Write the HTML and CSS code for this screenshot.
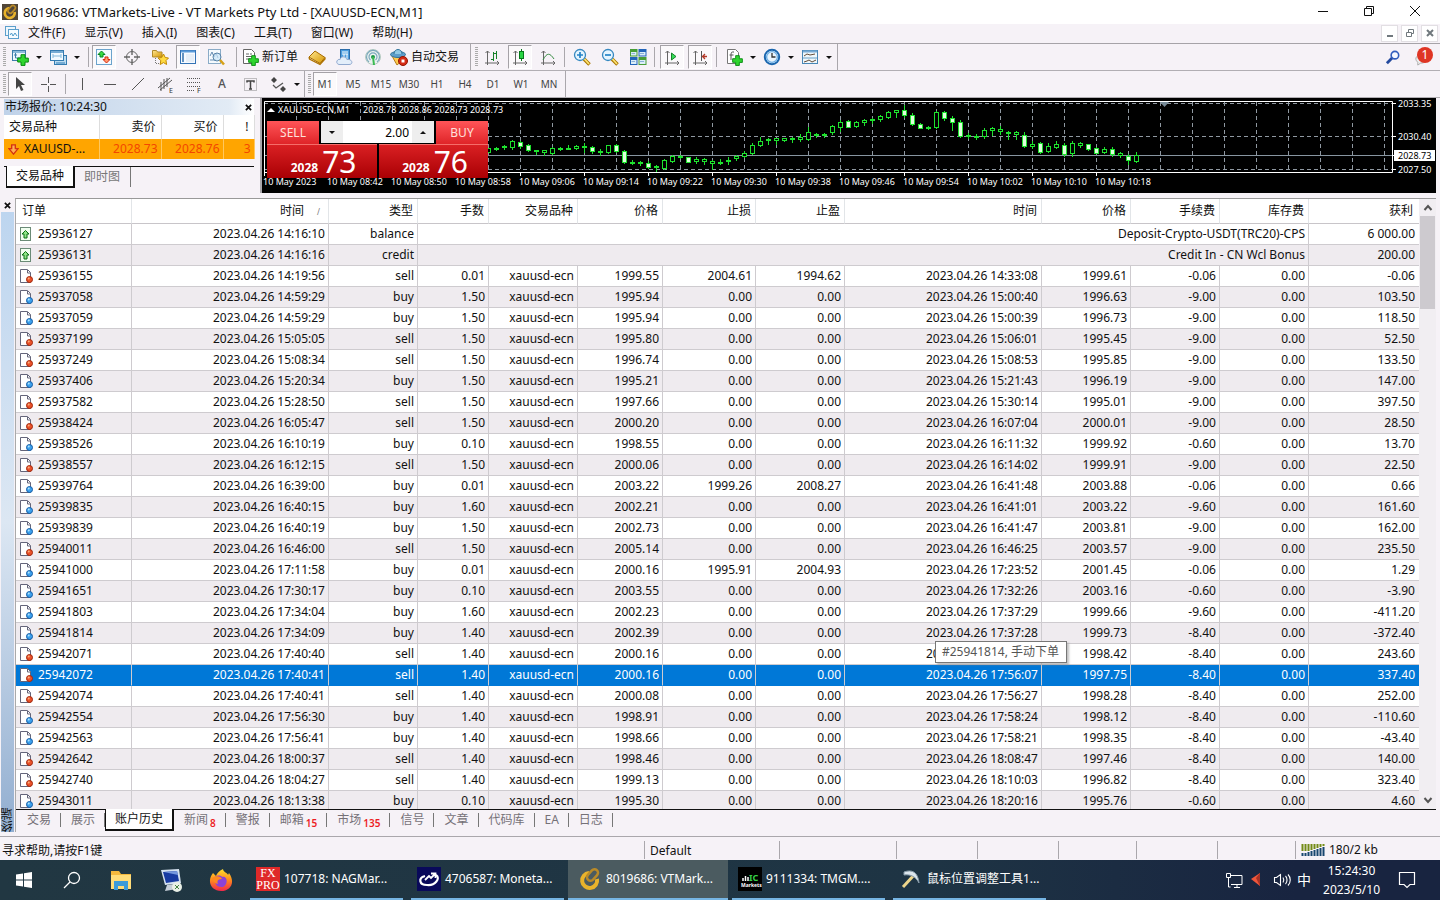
FILE: index.html
```html
<!DOCTYPE html>
<html lang="zh-CN">
<head>
<meta charset="utf-8">
<title>8019686: VTMarkets-Live - VT Markets Pty Ltd - [XAUUSD-ECN,M1]</title>
<link rel="stylesheet" href="styles.css">
</head>
<body>
<svg class="defs" aria-hidden="true">
  <defs>
    <linearGradient id="gold" x1="0" y1="0" x2="1" y2="1"><stop offset="0" stop-color="#ffe793"/><stop offset="1" stop-color="#d59600"/></linearGradient>
    <linearGradient id="fire" x1="0" y1="0" x2="0" y2="1"><stop offset="0" stop-color="#ffe02e"/><stop offset="0.5" stop-color="#ff8a1c"/><stop offset="1" stop-color="#f0284c"/></linearGradient>
    <symbol id="plus" viewBox="0 0 12 12"><path d="M4 .7h4v3.400h3.300v4H8v3.300H4V8H.7V4H4z" fill="#2fd52f" stroke="#078a10"/></symbol>
    <symbol id="newchart" viewBox="0 0 18 18"><rect x="1.500" y="2.500" width="13" height="10" fill="#edf6fd" stroke="#3d7cab"/><path d="M2 4h12" stroke="#8cbadb" stroke-width="2"/><path d="M4.500 5v5h6M3 7h3" fill="none" stroke="#3d7cab"/><use href="#plus" x="6" y="6" width="12" height="12"/></symbol>
    <symbol id="windows" viewBox="0 0 18 18"><rect x="5.500" y="7.500" width="12" height="9" fill="#bddcf0" stroke="#347bb0"/><rect x="1.500" y="2.500" width="13" height="10" fill="#f2faff" stroke="#347bb0"/><path d="M2 4h12M7 15h9" stroke="#76acd4" stroke-width="2"/><path d="M4 8h8M4 6v4m8-4v4" stroke="#83b8da"/></symbol>
    <symbol id="market" viewBox="0 0 18 18"><rect x="1.500" y="1.500" width="15" height="15" fill="#f4faff" stroke="#6ba3cc"/><path d="M6.500 3l3.500 3.500H8V9H5V6.500H3z" fill="#3adb41" stroke="#078522"/><path d="M10 9h3v2.500h2L11.500 15 8 11.500h2z" fill="#ff9a71" stroke="#d92608"/></symbol>
    <symbol id="target" viewBox="0 0 18 18"><circle cx="9" cy="9" r="5.500" fill="none" stroke="#666"/><path d="M9 1v6M9 11v6M1 9h6M11 9h6" stroke="#666" stroke-width="1.400"/></symbol>
    <symbol id="favorites" viewBox="0 0 18 18"><path d="M1.500 8V2.500h4l1 1.500H11v5H1.500z" fill="url(#gold)" stroke="#b08a2c"/><path d="M4.500 10v5.500H9" fill="none" stroke="#777" stroke-dasharray="1 1"/><path d="M12.500 6l1.700 3.500 3.300.5-2.500 2.600.6 3.900-3.100-1.900-3.300 1.900.6-3.900L7 10l3.700-.5z" fill="#ffda42" stroke="#c28900"/></symbol>
    <symbol id="terminal" viewBox="0 0 18 18"><rect x="1.500" y="2.500" width="15" height="13" fill="#f6faff" stroke="#3473b5"/><path d="M2 3.500h14" stroke="#5b9cda" stroke-width="2"/><path d="M3 5h2v9H3z" fill="#6292c1"/><path d="M7 7h8M7 9h8M7 11h8M7 13h8" stroke="#d7e3ef"/></symbol>
    <symbol id="tester" viewBox="0 0 18 18"><rect x="1.500" y="1.500" width="12" height="14" fill="#f5fafe" stroke="#8aabc7"/><path d="M3 8l2-4 2 5 2-4 2 5M3 12h6" fill="none" stroke="#688eb4"/><circle cx="10" cy="9" r="4" fill="#c9e4f7" fill-opacity=".7" stroke="#5783a9"/><path d="M13 12l4 4.500" stroke="#d5a11a" stroke-width="2.500"/></symbol>
    <symbol id="order" viewBox="0 0 18 18"><path d="M2.500 1.500h8l3 3v11h-11z" fill="#fff" stroke="#666"/><path d="M5 6h3m1 0h2M5 8.500h6M5 11h4" stroke="#666"/><use href="#plus" x="7" y="7" width="11" height="11"/></symbol>
    <symbol id="book" viewBox="0 0 18 18"><path d="M1 9l6-6 10 6.500-5 6z" fill="url(#gold)" stroke="#a66a00"/><path d="M1 9l.5 2L12 16.500l5-5.500V9.500" fill="none" stroke="#ae7200" stroke-width="1.300"/></symbol>
    <symbol id="cloud" viewBox="0 0 18 18"><rect x="4.500" y="1.500" width="9" height="10" fill="#4b9de0" stroke="#2c6ca9"/><path d="M6 4h6M6 6h6M8 6v5m3-5v5" stroke="#fff"/><path d="M3 16.500c-4-1-2-6 1-5 1-4 6-3 7 0 5-1 7 5 2 5z" fill="#e3eefa" stroke="#91a9cf"/></symbol>
    <symbol id="signal" viewBox="0 0 18 18"><circle cx="9" cy="9" r="7.500" fill="#eef3f1" stroke="#b4c9c0"/><path d="M6.500 12a4 4 0 1 1 5 0M5 14a6.500 6.500 0 1 1 8 0" fill="none" stroke="#7ba9bd" stroke-width="1.200"/><circle cx="9" cy="9" r="2" fill="#1d9747"/><path d="M9 9l1 8" stroke="#3bbb52" stroke-width="2"/></symbol>
    <symbol id="auto" viewBox="0 0 18 18"><path d="M2 8l5 9 8-7z" fill="#ffca50" stroke="#b47e1a"/><ellipse cx="8" cy="6.500" rx="7.500" ry="3" fill="#5c9dca" stroke="#317399"/><path d="M4 6c0-6 8-6 8 0" fill="#91c9e5" stroke="#317399"/><circle cx="13" cy="13" r="4.500" fill="#d52b15" stroke="#921500"/><path d="M11.500 11.500h3v3h-3z" fill="#fff"/></symbol>
    <symbol id="axes" viewBox="0 0 18 18"><path d="M4.500 3v12H16M2.500 5l2-2 2 2M14 13l2 2-2 2M2 15h2.500v2" fill="none" stroke="#666"/></symbol>
    <symbol id="bars" viewBox="0 0 18 18"><use href="#axes"/><path d="M8 11.500h2.500M10.500 4v9M10.500 5.500H13M13.500 3v8" fill="none" stroke="#168129"/></symbol>
    <symbol id="candles" viewBox="0 0 18 18"><use href="#axes"/><path d="M10.500 1v12" stroke="#05791a"/><rect x="8.500" y="3.500" width="4" height="7" fill="#28d443" stroke="#05791a"/></symbol>
    <symbol id="line" viewBox="0 0 18 18"><use href="#axes"/><path d="M4 12c4-8 7-7 11-1" fill="none" stroke="#398d45"/></symbol>
    <symbol id="zoombase" viewBox="0 0 18 18"><path d="M11 11l5.500 5.500" stroke="#a97600" stroke-width="3.500"/><path d="M11 10.500l5 5.500" stroke="#ffe574" stroke-width="1.700"/><circle cx="7" cy="7" r="5.500" fill="#e5f5ff" stroke="#3688c0" stroke-width="1.300"/></symbol>
    <symbol id="zoomin" viewBox="0 0 18 18"><use href="#zoombase"/><path d="M4 7h6M7 4v6" stroke="#2483c8" stroke-width="1.700"/></symbol>
    <symbol id="zoomout" viewBox="0 0 18 18"><use href="#zoombase"/><path d="M4 7h6" stroke="#2483c8" stroke-width="1.700"/></symbol>
    <symbol id="tiles" viewBox="0 0 18 18"><path d="M1 1h7.500v7.500H1zM9.500 9h8v8h-8z" fill="#479e37"/><path d="M9.500 1h8v7.500h-8zM1 9h7.500v8H1z" fill="#2265ba"/><path d="M2 4h5.500v3.500H2zM10.500 4h6v3.500h-6zM2 12h5.500v4H2zM10.500 12h6v4h-6z" fill="#dbeef9"/><path d="M2.500 5.500H6m5 0h4m-12.500 8H6m5 0h4" stroke="#8ab0d5"/></symbol>
    <symbol id="scroll" viewBox="0 0 18 18"><use href="#axes"/><path d="M8.500 5v7l4.500-3.500z" fill="#37dd59" stroke="#168129"/></symbol>
    <symbol id="shift" viewBox="0 0 18 18"><use href="#axes"/><path d="M10.500 3v10" stroke="#555"/><path d="M16 8.500h-4m2-2.500l-2.500 2.500L14 11" fill="none" stroke="#b33929" stroke-width="1.300"/></symbol>
    <symbol id="indicator" viewBox="0 0 18 18"><path d="M2.500 1.500h8l3 3v11h-11z" fill="#fff" stroke="#777"/><path d="M9 4H7.500C6 4 6 6 6 8v4M4.500 7h4" fill="none" stroke="#555"/><use href="#plus" x="7" y="7" width="11" height="11"/></symbol>
    <symbol id="clock" viewBox="0 0 18 18"><circle cx="9" cy="9" r="7.200" fill="#fff" stroke="#1a66ae" stroke-width="2"/><circle cx="9" cy="9" r="5.400" fill="#eaf5fd" stroke="#70b0e5" stroke-width="1.400"/><path d="M9 5v4h3.500" fill="none" stroke="#333" stroke-width="1.300"/></symbol>
    <symbol id="template" viewBox="0 0 18 18"><rect x="1.500" y="2.500" width="15" height="13" fill="#eff8fc" stroke="#4987b6"/><path d="M2 3.500h14" stroke="#78aad5" stroke-width="2"/><path d="M2 10h14" stroke="#689ec5"/><path d="M3 8l3-2 3 1 5-1M3 14l3-1 2-1 3 2 4-2" fill="none" stroke="#654c39"/></symbol>
    <symbol id="pointer" viewBox="0 0 18 18"><path d="M5 2v12l3-3 2 5 2.500-1-2.500-5h4z" fill="#444"/></symbol>
    <symbol id="cross" viewBox="0 0 18 18"><path d="M9.500 2v6M9.500 11v6M2 9.500h6M11 9.500h6" stroke="#555"/></symbol>
    <symbol id="vline" viewBox="0 0 18 18"><path d="M9.500 3v12" stroke="#555"/></symbol>
    <symbol id="hline" viewBox="0 0 18 18"><path d="M3 9.500h12" stroke="#555"/></symbol>
    <symbol id="trend" viewBox="0 0 18 18"><path d="M3 15L15 3" stroke="#555"/></symbol>
    <symbol id="channel" viewBox="0 0 18 18"><path d="M1 13L13 3M3 15L15 5M4 7v9M7 4v10M10 3v9" stroke="#555"/><text x="12" y="18" font-size="7" font-family="Noto Sans" fill="#333">E</text></symbol>
    <symbol id="fibo" viewBox="0 0 18 18"><path d="M2 3.500h14M2 7.500h14M2 11.500h14M2 15.500h8" stroke="#555" stroke-dasharray="1 1"/><text x="12" y="18" font-size="7" font-family="Noto Sans" fill="#333">F</text></symbol>
    <symbol id="label" viewBox="0 0 18 18"><rect x="3.500" y="3.500" width="12" height="12" fill="none" stroke="#888" stroke-dasharray="1 1"/><path d="M6 7.500V6h7v1.500M9.500 6v8M8 14h3" fill="none" stroke="#444" stroke-width="1.500"/></symbol>
    <symbol id="arrows" viewBox="0 0 18 18"><path d="M5 2l3 3-3 3-3-3zM14 11l3 3-3 3-3-3z" fill="#444"/><path d="M4 10l3 3 7-5" fill="none" stroke="#555" stroke-width="1.300"/></symbol>
    <symbol id="deposit" viewBox="0 0 14 14"><rect x="1.500" y=".5" width="10" height="13" fill="#f1fff0" stroke="#6b8b77"/><path d="M6.500 3.500l3.500 3.500H8v4H5V7H3z" fill="#8ee486" stroke="#077012"/></symbol>
    <symbol id="doc" viewBox="0 0 14 14"><path d="M1.500 .5h7l3 3v10h-10z" fill="#fff" stroke="#64657a"/><path d="M8.500 1v3h3" fill="none" stroke="#64657a"/></symbol>
    <symbol id="sell" viewBox="0 0 14 14"><use href="#doc"/><circle cx="10.500" cy="10.500" r="3" fill="#eb522a" stroke="#a32609"/><circle cx="9.700" cy="9.500" r="1" fill="#ffb07b"/></symbol>
    <symbol id="buy" viewBox="0 0 14 14"><use href="#doc"/><circle cx="10.500" cy="10.500" r="3" fill="#3da1ed" stroke="#145ca6"/><circle cx="9.700" cy="9.500" r="1" fill="#b0e5ff"/></symbol>
    <symbol id="vt" viewBox="0 0 24 24"><path d="M11 6a7.500 7.500 0 1 0 8 6" fill="none" stroke="#e9b32b" stroke-width="4"/><rect x="11" y="1.500" width="7" height="13" rx="3.500" transform="rotate(42 14.500 8)" fill="none" stroke="#b98a28" stroke-width="2.500"/></symbol>
  </defs>
</svg>

<header class="titlebar">
  <span class="app-icon"><svg class="fill"><use href="#vt"/></svg></span>
  <h1>8019686: VTMarkets-Live - VT Markets Pty Ltd - [XAUUSD-ECN,M1]</h1>
  <div class="win-buttons">
    <button aria-label="最小化"><svg viewBox="0 0 12 12"><path d="M1 6.500h10"/></svg></button>
    <button aria-label="还原"><svg viewBox="0 0 12 12"><path d="M1.500 3.500h7v7h-7zM3.500 3.500v-2h7v7h-2"/></svg></button>
    <button aria-label="关闭"><svg viewBox="0 0 12 12"><path d="M1 1l10 10M11 1L1 11"/></svg></button>
  </div>
</header>

<nav class="menubar">
  <svg class="menu-icon" viewBox="0 0 16 16"><rect x="1.500" y="1.500" width="10" height="9" fill="#eef7fd" stroke="#5c9fcb"/><rect x="4.500" y="4.500" width="10" height="9" fill="#f7fcff" stroke="#5c9fcb"/><path d="M6 10l1.500-2L9 11l2-3 2 3" fill="none" stroke="#4e9ac9"/></svg>
  <button>文件(F)</button><button>显示(V)</button><button>插入(I)</button><button>图表(C)</button><button>工具(T)</button><button>窗口(W)</button><button>帮助(H)</button>
  <div class="mdi">
    <button aria-label="最小化图表"><svg viewBox="0 0 12 12"><path d="M3 9h6"/></svg></button>
    <button aria-label="还原图表"><svg viewBox="0 0 12 12"><path class="thin" d="M2.500 5.500h5v4h-5zM4.500 5V2.500h5v4H8"/></svg></button>
    <button aria-label="关闭图表"><svg viewBox="0 0 12 12"><path d="M3 3l6 6M9 3L3 9"/></svg></button>
  </div>
</nav>

<div class="toolrow">
  <div class="toolbar main">
    <span class="grip"></span>
    <button class="tool" aria-label="新图表"><svg><use href="#newchart"/></svg></button><button class="drop" aria-label="图表列表"></button>
    <button class="tool" aria-label="配置"><svg><use href="#windows"/></svg></button><button class="drop" aria-label="配置列表"></button>
    <span class="sep"></span>
    <button class="tool on" aria-label="市场报价"><svg><use href="#market"/></svg></button>
    <button class="tool" aria-label="数据窗口"><svg><use href="#target"/></svg></button>
    <button class="tool" aria-label="导航"><svg><use href="#favorites"/></svg></button>
    <button class="tool on" aria-label="终端窗口"><svg><use href="#terminal"/></svg></button>
    <button class="tool" aria-label="测试"><svg><use href="#tester"/></svg></button>
    <span class="sep"></span>
    <button class="tool wide"><svg><use href="#order"/></svg>新订单</button>
    <button class="tool" aria-label="编辑器"><svg><use href="#book"/></svg></button>
    <button class="tool" aria-label="主机"><svg><use href="#cloud"/></svg></button>
    <button class="tool" aria-label="交易信号"><svg><use href="#signal"/></svg></button>
    <button class="tool wide"><svg><use href="#auto"/></svg>自动交易</button>
  </div>
  <div class="toolbar charts">
    <span class="grip"></span>
    <button class="tool" aria-label="柱状图"><svg><use href="#bars"/></svg></button>
    <button class="tool on" aria-label="蜡烛图"><svg><use href="#candles"/></svg></button>
    <button class="tool" aria-label="折线图"><svg><use href="#line"/></svg></button>
    <span class="sep"></span>
    <button class="tool" aria-label="放大"><svg><use href="#zoomin"/></svg></button>
    <button class="tool" aria-label="缩小"><svg><use href="#zoomout"/></svg></button>
    <button class="tool" aria-label="平铺"><svg><use href="#tiles"/></svg></button>
    <span class="sep"></span>
    <button class="tool on" aria-label="自动滚动"><svg><use href="#scroll"/></svg></button>
    <button class="tool on" aria-label="图表平移"><svg><use href="#shift"/></svg></button>
    <span class="sep"></span>
    <button class="tool" aria-label="指标"><svg><use href="#indicator"/></svg></button><button class="drop" aria-label="指标列表"></button>
    <button class="tool" aria-label="周期"><svg><use href="#clock"/></svg></button><button class="drop" aria-label="周期列表"></button>
    <button class="tool" aria-label="模板"><svg><use href="#template"/></svg></button><button class="drop" aria-label="模板列表"></button>
  </div>
  <div class="tool-right">
    <button aria-label="搜索"><svg viewBox="0 0 18 18"><path d="M2 15l6-6" stroke="#23499e" stroke-width="3"/><circle cx="10.500" cy="6.500" r="4" fill="#f4f8ff" stroke="#315dbd" stroke-width="1.700"/></svg></button>
    <button class="notice" aria-label="通知"><svg viewBox="0 0 18 18"><path d="M4 14c-5-4 0-9 5-8 6 2 6 9-2 9l-3 2z" fill="#eee" stroke="#aaa"/></svg><span class="badge">1</span></button>
  </div>
</div>
<div class="toolrow second">
  <div class="toolbar">
    <span class="grip"></span>
    <button class="tool on" aria-label="光标"><svg><use href="#pointer"/></svg></button>
    <button class="tool" aria-label="十字准线"><svg><use href="#cross"/></svg></button>
    <span class="sep"></span>
    <button class="tool" aria-label="垂直线"><svg><use href="#vline"/></svg></button>
    <button class="tool" aria-label="水平线"><svg><use href="#hline"/></svg></button>
    <button class="tool" aria-label="趋势线"><svg><use href="#trend"/></svg></button>
    <button class="tool" aria-label="通道"><svg><use href="#channel"/></svg></button>
    <button class="tool" aria-label="斐波那契"><svg><use href="#fibo"/></svg></button>
    <button class="tool letter">A</button>
    <button class="tool" aria-label="文本标签"><svg><use href="#label"/></svg></button>
    <button class="tool" aria-label="箭头"><svg><use href="#arrows"/></svg></button><button class="drop" aria-label="箭头列表"></button>
  </div>
  <div class="toolbar periods">
    <span class="grip"></span>
    <button class="tool on">M1</button><button class="tool">M5</button><button class="tool">M15</button><button class="tool">M30</button><button class="tool">H1</button><button class="tool">H4</button><button class="tool">D1</button><button class="tool">W1</button><button class="tool">MN</button>
  </div>
</div>

<section class="upper">
  <aside class="watch">
    <div class="watch-title"><span>市场报价: 10:24:30</span><button aria-label="关闭市场报价"><svg viewBox="0 0 8 8"><path d="M1 1l6 6M7 1L1 7"/></svg></button></div>
    <table class="quotes">
      <colgroup><col class="q1"><col class="q2"><col class="q2"><col class="q3"></colgroup>
      <thead><tr><th>交易品种</th><th>卖价</th><th>买价</th><th>!</th></tr></thead>
      <tbody><tr><td><svg class="down" viewBox="0 0 12 12"><path d="M4 1h4v4h3l-5 6-5-6h3z" fill="#ffb055" stroke="#d53212" stroke-width="1.500"/></svg>XAUUSD-...</td><td>2028.73</td><td>2028.76</td><td>3</td></tr></tbody>
    </table>
    <div class="watch-tabs"><button class="active">交易品种</button><button>即时图</button></div>
  </aside>
  <div class="chart">
    <svg class="plot" id="plot" viewBox="262 98 1174 95" preserveAspectRatio="xMinYMin slice" role="img" aria-label="XAUUSD-ECN M1"></svg>
    <div class="trade">
      <div class="trade-top">
        <button class="side">SELL</button>
        <div class="lots"><button aria-label="减少"><i class="tri-down"></i></button><input aria-label="手数" value="2.00"><button aria-label="增加"><i class="tri-up"></i></button></div>
        <button class="side">BUY</button>
      </div>
      <div class="trade-prices">
        <button><small>2028</small><b>73</b></button>
        <button><small>2028</small><b>76</b></button>
      </div>
    </div>
  </div>
</section>

<main class="terminal">
  <div class="strip">
    <button aria-label="关闭终端"><svg viewBox="0 0 8 8"><path d="M1 1l6 6M7 1L1 7"/></svg></button>
    <div class="strip-bar"><span>终端</span></div>
  </div>
  <div class="terminal-body">
    <div class="history">
      <div class="history-scroll">
        <table class="orders">
          <colgroup><col class="w116"><col class="w197"><col class="w89"><col class="w71"><col class="w89"><col class="w85"><col class="w93"><col class="w89"><col class="w197"><col class="w89"><col class="w89"><col class="w89"><col class="w110"></colgroup>
          <thead><tr><th>订单</th><th>时间<span class="sort">/</span></th><th>类型</th><th>手数</th><th>交易品种</th><th>价格</th><th>止损</th><th>止盈</th><th>时间</th><th>价格</th><th>手续费</th><th>库存费</th><th>获利</th></tr></thead>
          <tbody id="rows"></tbody>
        </table>
      </div>
      <div class="scrollbar"><svg viewBox="0 0 10 10"><path d="M1.500 7L5 3l3.500 4"/></svg><div class="track"><div class="thumb"></div></div><svg viewBox="0 0 10 10"><path d="M1.500 3L5 7l3.500-4"/></svg></div>
    </div>
    <div class="tabs">
      <button>交易</button><button>展示</button><button class="active">账户历史</button><button>新闻<sub>8</sub></button><button>警报</button><button>邮箱<sub>15</sub></button><button>市场<sub>135</sub></button><button>信号</button><button>文章</button><button>代码库</button><button>EA</button><button>日志</button>
    </div>
  </div>
  <div class="tooltip" role="tooltip">#25941814, 手动下单</div>
</main>

<footer class="status">
  <span class="help">寻求帮助,请按F1键</span><span class="s135">Default</span><span class="s117"></span><span class="s81"></span><span class="s81"></span><span class="s78"></span><span class="s81"></span><span class="s78"></span>
  <span class="net"><svg viewBox="0 0 24 14"><path d="M1.500 1v7M4.500 1v7M7.500 1v7M10.500 1v6M13.500 1v5M16.500 1v4M19.500 1v3M22.500 1v2" stroke="#738b17" stroke-width="2"/><path d="M1.500 10v3M4.500 10v3M7.500 9v4M10.500 8v5M13.500 7v6M16.500 6v7M19.500 5v8M22.500 4v9" stroke="#17466f" stroke-width="2"/></svg>180/2 kb</span>
</footer>

<div class="taskbar">
  <button class="launch" aria-label="开始"><svg viewBox="0 0 18 18"><path d="M1 3.500l7-1V8.500H1zM9 2.300L17 1v7.500H9zM1 9.500h7v6l-7-1zM9 9.500h8V17l-8-1.300z" fill="#fff"/></svg></button>
  <button class="launch" aria-label="搜索"><svg viewBox="0 0 18 18"><circle cx="11" cy="7" r="5.500" fill="none" stroke="#fff" stroke-width="1.300"/><path d="M7 11l-6 6" stroke="#fff" stroke-width="1.300"/></svg></button>
  <button class="launch big" aria-label="文件夹"><svg viewBox="0 0 24 24"><path d="M2 3h8l2 3h10v15H2z" fill="#f4b83d"/><path d="M2 7h20v14H2z" fill="#ffdc79"/><path d="M5 13h14v9h-4v-4H9v4H5z" fill="#3c9bd9"/></svg></button>
  <button class="launch big" aria-label="远程桌面"><svg viewBox="0 0 24 24"><path d="M2 2l18-1 2 14-16 2z" fill="#d4e1ef"/><path d="M4 4l14-1 2 10-13 2z" fill="#183ba1"/><path d="M5 4l13-1 1 4z" fill="#7497dd"/><path d="M8 17l7-1 3 5-12 2z" fill="#c5ced8"/><circle cx="18" cy="19" r="5" fill="#e9efe6"/><path d="M16 17l2 2-2 2m4-4l-2 2 2 2" fill="none" stroke="#448341"/></svg></button>
  <button class="launch big" aria-label="浏览器"><svg viewBox="0 0 24 24"><path d="M4 5l3 3c1-3 3-5 7-7 0 3 5 4 5 6l1-2c7 10 1 18-8 18S-3 14 4 5z" fill="url(#fire)"/><path d="M6 9c2-2 6-2 7 0 5-2 7 7 1 10C7 20 5 14 6 9z" fill="#8b42d7"/><path d="M3 10c4-3 9-2 10 1-5 0-5 3-4 5-4-1-5-3-6-6z" fill="#ff891e"/></svg></button>
  <button class="task"><span class="logo fx"><span>FX</span><span>PRO</span></span>107718: NAGMar...</button>
  <button class="task"><span class="logo navy"><svg viewBox="0 0 24 24"><path d="M8 9c-7 2-6 9 2 9 8 1 14-7 9-10" fill="none" stroke="#fff" stroke-width="2.200"/><path d="M8 13l4-4 2 2 4-4M14 6.500h4.500V11" fill="none" stroke="#fff" stroke-width="1.800"/></svg></span>4706587: Moneta...</button>
  <button class="task active"><span class="logo"><svg viewBox="0 0 24 24"><use href="#vt"/></svg></span>8019686: VTMark...</button>
  <button class="task"><span class="logo ic"><svg viewBox="0 0 24 24"><path d="M5 14v-3M7.500 14V9M10 14v-4" stroke="#fff" stroke-width="1.500"/><text x="11" y="14" font-size="9" font-weight="700" font-family="Noto Sans" fill="#36cf45">IC</text><text x="3" y="20" font-size="5" font-weight="700" font-family="Noto Sans" fill="#fff">Markets</text></svg></span>9111334: TMGM....</button>
  <button class="task"><span class="logo"><svg viewBox="0 0 24 24"><path d="M16 7L4 20" stroke="#edd58b" stroke-width="3"/><path d="M5 5c8-3 14 0 15 11-3-6-8-9-15-8z" fill="#dce6ed" stroke="#879ba9"/></svg></span>鼠标位置调整工具1...</button>
  <div class="tray">
    <svg viewBox="0 0 18 18"><path d="M5 4.500h12v9H6M9 16.500h6M12 14v2M1.500 2.500h4v4h-4zM3.500 7v9h2" fill="none" stroke="#fff"/></svg>
    <svg viewBox="0 0 18 18"><path d="M2 8l9-6v13z" fill="#ee563b"/><path d="M7 7l4-5v13z" fill="#a63125"/></svg>
    <svg viewBox="0 0 18 18"><path d="M1.500 6.500h2l4-3v11l-4-3h-2zM10 6.500c1 1.500 1 3.500 0 5M12.500 5c2 2 2 6 0 8M15 3.500c3 3 3 8 0 11" fill="none" stroke="#fff" stroke-width="1.100"/></svg>
    <span class="ime">中</span>
    <time><span>15:24:30</span><span>2023/5/10</span></time>
    <svg viewBox="0 0 18 18"><path d="M1.500 1.500h15v12H12l-3 3-3-3H1.500z" fill="none" stroke="#fff" stroke-width="1.200"/></svg>
  </div>
</div>
<script src="app.js"></script>
</body>
</html>
```
FILE: styles.css
```css
* { box-sizing: border-box; }
html, body { height: 100%; }
body { margin: 0; display: flex; flex-direction: column; overflow: hidden; background: #f6f2f7; color: #111; font: 12px/16px "Noto Sans", "Noto Sans CJK SC", sans-serif; }
button { font: inherit; color: inherit; background: none; border: 0; padding: 0; margin: 0; white-space: nowrap; }
svg { display: block; flex: none; }
.defs { position: absolute; width: 0; height: 0; }
.fill { width: 100%; height: 100%; }

.titlebar { display: flex; align-items: center; height: 24px; flex: none; background: #fff; padding-left: 2px; gap: 5px; }
.app-icon { width: 16px; height: 16px; background: #514638; }
h1 { margin: 0; font-size: 13px; font-weight: 400; }
.win-buttons { margin-left: auto; margin-right: 2px; display: flex; }
.win-buttons button { width: 46px; height: 22px; display: grid; place-items: center; padding-bottom: 2px; }
.win-buttons svg { width: 12px; height: 12px; fill: none; stroke: #111; }

.menubar { display: flex; align-items: center; height: 20px; flex: none; border-bottom: 1px solid #a6a3a8; gap: 19px; padding: 0 2px 1px 4px; }
.menu-icon { width: 16px; height: 16px; margin-right: -11px; }
.mdi { margin-left: auto; display: flex; gap: 3px; }
.mdi button { width: 17px; height: 17px; background: #fff; border: 1px solid #e2dfe3; display: grid; place-items: center; }
.mdi svg { width: 12px; height: 12px; fill: none; stroke: #70787d; stroke-width: 2; }
.mdi .thin { stroke-width: 1; }

.toolrow { display: flex; height: 27px; flex: none; border-bottom: 1px solid #b1aeb3; }
.toolbar { display: flex; align-items: center; padding: 0 2px 0 3px; border-right: 1px solid #aaa7ac; }
.toolbar.main { padding-right: 6px; }
.toolbar.charts { padding: 0 3px 0 4px; }
.grip { width: 3px; height: 20px; background: repeating-linear-gradient(#aaa 0 1px, transparent 1px 2px); }
.tool { width: 28px; height: 24px; display: flex; align-items: center; justify-content: center; border: 1px solid transparent; }
.tool.on { background: #fbf9fb; border-color: #a5a2a7 #fff #fff #a5a2a7; width: 24px; margin: 0 2px; }
.tool svg { width: 18px; height: 18px; }
.tool.wide { width: auto; padding: 0 4px 0 2px; gap: 3px; }
.drop { width: 10px; height: 24px; display: grid; place-items: center; }
.drop::before { content: ""; border: 3px solid transparent; border-top-color: #111; border-bottom: 0; }
.sep { width: 1px; height: 20px; background: #aaa7ac; margin: 0 1px 0 6px; }
.charts .sep { margin: 0 3px 0 2px; }
.tool-right { margin-left: auto; display: flex; align-items: center; gap: 12px; padding-right: 9px; }
.tool-right svg { width: 17px; height: 17px; }
.notice { position: relative; }
.badge { position: absolute; left: 3px; top: -2px; width: 16px; height: 16px; border-radius: 50%; background: #df3524; color: #fff; font-size: 12px; line-height: 16px; }
.second .sep { margin: 0 2px 0 3px; }
.letter { color: #555; font-weight: 500; }
.periods .tool { font-size: 10px; color: #444; }

.upper { display: flex; height: 95px; flex: none; }
.watch { width: 262px; flex: none; padding: 1px 6px 0 4px; border-right: 2px solid #aaa7ac; }
.watch-title { display: flex; align-items: center; justify-content: space-between; height: 16px; padding: 0 2px 0 1px; background: linear-gradient(90deg, #bfd2e9, #e2ebf5 90%, #fff); }
.watch-title svg, .strip > button svg { width: 7px; height: 7px; stroke: #111; stroke-width: 2; }
.quotes { width: 100%; border-collapse: collapse; table-layout: fixed; background: #fff; }
.q1 { width: 95px; } .q2 { width: 62px; } .q3 { width: 31px; }
.quotes th { font-weight: 400; height: 24px; padding: 0 5px; text-align: right; border-right: 1px solid #ddd; }
.quotes td { height: 20px; padding: 0 3px; text-align: right; background: #ffa500; color: #f34700; border-right: 1px solid #ffc75e; }
.quotes th:first-child, .quotes td:first-child { text-align: left; }
.quotes td:first-child { color: #111; }
.down { width: 11px; height: 11px; display: inline-block; vertical-align: -2px; margin: 0 5px 0 1px; }
.watch-tabs { margin-top: 7px; border-top: 1px solid #111; display: flex; align-items: flex-start; }
.watch-tabs button { padding: 0 10px 0 9px; height: 20px; color: #777; border-right: 1px solid #777; }
.watch-tabs .active { margin: -1px 0 0 2px; background: #fff; color: #111; border: 2px solid #111; border-width: 0 2px 2px 1px; height: 22px; padding: 0 9px; }

.chart { position: relative; flex: 1; min-width: 0; background: #000; margin-right: 4px; overflow: hidden; }
.plot { width: 100%; height: 100%; }
.plot text { font-family: "Noto Sans", sans-serif; fill: #fff; font-size: 9px; }
.plot .current { fill: #000; }
.trade { position: absolute; left: 5px; top: 23px; width: 221px; background: #000; }
.trade-top { display: flex; height: 23px; gap: 2px; }
.side { width: 52px; background: linear-gradient(#ff5558, #df2428); color: #ffe0dc; font-size: 12px; }
.lots { flex: 1; display: flex; min-width: 0; }
.lots button { width: 22px; background: #eee; height: 22px; display: grid; place-items: center; }
.lots input { flex: 1; min-width: 0; border: 0; padding: 0 3px; text-align: right; font: inherit; height: 22px; }
.tri-down, .tri-up { border: 3px solid transparent; }
.tri-down { border-top-color: #111; border-bottom: 0; }
.tri-up { border-bottom-color: #111; border-top: 0; }
.trade-prices { display: flex; gap: 2px; height: 34px; }
.trade-prices button { flex: 1; background: linear-gradient(#da2023, #a90004); color: #fff; display: flex; align-items: flex-end; justify-content: flex-end; gap: 4px; padding: 0 20px 0 0; border-top: 1px solid #f56d69; }
.trade-prices small { font-size: 12px; font-weight: 700; line-height: 20px; }
.trade-prices b { font-size: 30px; font-weight: 400; line-height: 32px; }

.terminal { position: relative; flex: 1; min-height: 0; display: flex; padding: 5px 4px 4px 0; border-bottom: 1px solid #aaa7ac; }
.strip { width: 15px; flex: none; display: flex; flex-direction: column; align-items: center; }
.strip > button { height: 14px; }
.strip-bar { width: 13px; flex: 1; background: linear-gradient(#bdd5ef, #dce7f3 50%, #92aed0); display: flex; align-items: flex-end; }
.strip-bar span { writing-mode: vertical-rl; transform: rotate(180deg); font-size: 12px; line-height: 13px; }
.terminal-body { flex: 1; min-width: 0; display: flex; flex-direction: column; border-left: 1px solid #aaa; border-top: 1px solid #999; }
.history { flex: 1; min-height: 0; display: flex; border-bottom: 1px solid #111; }
.history-scroll { flex: 1; min-width: 0; overflow: hidden; background: #fff; }
.orders { width: 100%; table-layout: fixed; border-collapse: separate; border-spacing: 0; }
.w116 { width: 116px; } .w197 { width: 197px; } .w89 { width: 89px; } .w71 { width: 71px; } .w85 { width: 85px; } .w93 { width: 93px; } .w110 { width: 110px; }
.orders th { height: 25px; font-weight: 400; text-align: right; padding: 0 4px; border-right: 1px solid #e2e5e8; border-bottom: 1px solid #c8c5c9; }
.orders th:first-child { text-align: left; padding-left: 6px; }
.sort { font-size: 8px; color: #777; padding: 0 4px 0 13px; }
.orders td { height: 21px; text-align: right; padding: 0 3px; border-right: 1px solid #cecbcf; border-bottom: 1px solid #cecbcf; white-space: nowrap; }
.orders th:last-child { padding-right: 6px; border-right: 0; }
.orders td:last-child { padding-right: 4px; border-right: 0; }
.orders tr:nth-child(even) td { background: #efebef; }
.orders .selected td, .orders tr.selected:nth-child(even) td { background: #0078d7; color: #fff; border-bottom-color: #0078d7; }
.ticket { display: flex; align-items: center; gap: 5px; }
.ticket svg { width: 14px; height: 14px; }
.scrollbar { width: 17px; flex: none; background: #f1eef2; display: flex; flex-direction: column; align-items: center; padding: 4px 0; }
.scrollbar svg { width: 10px; height: 10px; fill: none; stroke: #555; stroke-width: 2; }
.track { flex: 1; width: 15px; padding-top: 3px; }
.thumb { height: 16%; background: #cdcacf; }
.tabs { display: flex; height: 22px; flex: none; padding: 0 0 0 1px; }
.tabs button { color: #757177; padding: 0 10px; position: relative; height: 20px; }
.tabs button::after { content: ""; position: absolute; right: 0; top: 3px; height: 14px; border-right: 1px solid #777; }
.tabs .active { color: #111; background: #fff; border: 2px solid #111; border-width: 0 2px 2px 1px; padding: 0 9px; margin-top: -1px; height: 22px; }
.tabs .active::after { display: none; }
.tabs sub { color: #ed1c24; font-size: 10px; line-height: 10px; font-weight: 600; margin-left: 2px; }
.tooltip { position: absolute; left: 935px; top: 448px; padding: 2px 7px 2px 6px; background: #fff; border: 1px solid #777; color: #555; box-shadow: 2px 2px 2px #8888; }

.status { display: flex; height: 23px; flex: none; align-items: center; padding-top: 2px; }
.status > span { border-left: 1px solid #aaa7ac; height: 18px; line-height: 19px; padding-left: 5px; }
.status .help { flex: 1; border: 0; padding-left: 2px; }
.s135 { width: 135px; } .s117 { width: 117px; } .s81 { width: 81px; } .s78 { width: 78px; }
.net { width: 145px; display: flex; align-items: center; gap: 4px; }
.net svg { width: 24px; height: 14px; }

.taskbar { display: flex; height: 40px; flex: none; background: linear-gradient(90deg, #213742, #1e3444 65%, #182440 90%); color: #fff; }
.launch { width: 48px; display: grid; place-items: center; }
.launch svg { width: 18px; height: 18px; }
.launch.big { width: 50px; }
.launch.big svg { width: 24px; height: 24px; }
.task { width: 153px; display: flex; align-items: center; gap: 4px; padding: 0 6px; border-bottom: 2px solid #76b5e3; margin-right: 8px; }
.launch + .task { margin-left: 4px; }
.task.active { width: 160px; margin: 0 4px 0 -4px; background: #4b5b60; padding-left: 10px; }
.logo { width: 24px; height: 24px; flex: none; }
.logo svg { width: 24px; height: 24px; }
.fx { background: #df2929; font: 12px/12px "Liberation Serif", serif; display: flex; flex-direction: column; align-items: center; }
.navy { background: #09095a; } .ic { background: #000; }
.tray { margin-left: auto; display: flex; align-items: center; padding-right: 24px; gap: 6px; }
.tray svg { width: 18px; height: 18px; }
.ime { font-size: 14px; margin: 0 6px 0 0; }
.tray time { display: flex; flex-direction: column; align-items: center; line-height: 19px; margin-right: 12px; }
```
FILE: app.js
```js
const orders = `25936155|14:19:56|sell|0.01|1999.55|2004.61|1994.62|14:33:08|1999.61|-0.06|-0.06
25937058|14:59:29|buy|1.50|1995.94|0.00|0.00|15:00:40|1996.63|-9.00|103.50
25937059|14:59:29|buy|1.50|1995.94|0.00|0.00|15:00:39|1996.73|-9.00|118.50
25937199|15:05:05|sell|1.50|1995.80|0.00|0.00|15:06:01|1995.45|-9.00|52.50
25937249|15:08:34|sell|1.50|1996.74|0.00|0.00|15:08:53|1995.85|-9.00|133.50
25937406|15:20:34|buy|1.50|1995.21|0.00|0.00|15:21:43|1996.19|-9.00|147.00
25937582|15:28:50|sell|1.50|1997.66|0.00|0.00|15:30:14|1995.01|-9.00|397.50
25938424|16:05:47|sell|1.50|2000.20|0.00|0.00|16:07:04|2000.01|-9.00|28.50
25938526|16:10:19|buy|0.10|1998.55|0.00|0.00|16:11:32|1999.92|-0.60|13.70
25938557|16:12:15|sell|1.50|2000.06|0.00|0.00|16:14:02|1999.91|-9.00|22.50
25939764|16:39:00|buy|0.01|2003.22|1999.26|2008.27|16:41:48|2003.88|-0.06|0.66
25939835|16:40:15|buy|1.60|2002.21|0.00|0.00|16:41:01|2003.22|-9.60|161.60
25939839|16:40:19|buy|1.50|2002.73|0.00|0.00|16:41:47|2003.81|-9.00|162.00
25940011|16:46:00|sell|1.50|2005.14|0.00|0.00|16:46:25|2003.57|-9.00|235.50
25941000|17:11:58|buy|0.01|2000.16|1995.91|2004.93|17:23:52|2001.45|-0.06|1.29
25941651|17:30:17|buy|0.10|2003.55|0.00|0.00|17:32:26|2003.16|-0.60|-3.90
25941803|17:34:04|buy|1.60|2002.23|0.00|0.00|17:37:29|1999.66|-9.60|-411.20
25941814|17:34:09|buy|1.40|2002.39|0.00|0.00|17:37:28|1999.73|-8.40|-372.40
25942071|17:40:40|sell|1.40|2000.16|0.00|0.00|17:56:05|1998.42|-8.40|243.60
25942072|17:40:41|sell|1.40|2000.16|0.00|0.00|17:56:07|1997.75|-8.40|337.40
25942074|17:40:41|sell|1.40|2000.08|0.00|0.00|17:56:27|1998.28|-8.40|252.00
25942554|17:56:30|buy|1.40|1998.91|0.00|0.00|17:58:24|1998.12|-8.40|-110.60
25942563|17:56:41|buy|1.40|1998.66|0.00|0.00|17:58:21|1998.35|-8.40|-43.40
25942642|18:00:37|sell|1.40|1998.46|0.00|0.00|18:08:47|1997.46|-8.40|140.00
25942740|18:04:27|sell|1.40|1999.13|0.00|0.00|18:10:03|1996.82|-8.40|323.40
25943011|18:13:38|buy|0.10|1995.30|0.00|0.00|18:20:16|1995.76|-0.60|4.60`;
const day = '2023.04.26 ';
const ticket = (icon, id) => `<td><span class="ticket"><svg><use href="#${icon}"/></svg>${id}</span></td>`;
let html = '';
for (const [id, time, type, note, sum] of [
  ['25936127', '14:16:10', 'balance', 'Deposit-Crypto-USDT(TRC20)-CPS', '6 000.00'],
  ['25936131', '14:16:16', 'credit', 'Credit In - CN Wcl Bonus', '200.00']
]) html += `<tr>${ticket('deposit', id)}<td>${day}${time}</td><td>${type}</td><td colspan="9">${note}</td><td>${sum}</td></tr>`;
for (const line of orders.split('\n')) {
  const [id, open, type, lots, price, sl, tp, close, closePrice, fee, profit] = line.split('|');
  const cells = [day + open, type, lots, 'xauusd-ecn', price, sl, tp, day + close, closePrice, fee, '0.00', profit];
  html += `<tr${id === '25942072' ? ' class="selected"' : ''}>${ticket(type, id)}${cells.map(c => `<td>${c}</td>`).join('')}</tr>`;
}
document.getElementById('rows').innerHTML = html;

// Each candle: high, body top, body bottom, low; a trailing 1 marks a filled body. One every 8 units from x = 488.
const candles = `148,148,152,152 147,148,149,150,1 145,146,147,149,1 140,141,147,149 141,142,146,148,1 144,145,150,151,1 150,150,151,154,1 150,150,152,155,1 147,148,153,154 147,148,149,150,1 145,148,149,149,1 145,146,148,149 143,146,147,152,1 146,147,151,153,1 149,151,152,155,1 145,145,152,153 144,145,151,152,1 150,151,162,163,1 160,162,163,164,1 161,162,163,165,1 161,163,167,168,1 165,166,167,171,1 159,160,168,169 155,156,161,162 155,156,157,158,1 157,157,162,162,1 157,159,161,163 158,159,161,164,1 160,161,163,169,1 159,162,163,164,1 157,160,161,164 155,156,158,160 151,153,156,157 143,145,153,154 137,141,145,146 138,139,140,144,1 138,138,140,144,1 138,138,140,141 137,138,139,142,1 134,137,139,141,1 127,132,139,140 133,134,135,137,1 133,134,135,137,1 125,126,132,134 120,122,127,131 120,121,127,127,1 121,122,126,127 119,120,122,125 118,119,120,123,1 115,116,119,121 111,112,117,118 110,110,112,117 105,110,115,117,1 113,115,124,125,1 123,124,128,128,1 126,127,128,129,1 111,112,127,128 111,112,118,120,1 116,118,122,130,1 120,122,136,137,1 133,135,136,138,1 134,136,137,139,1 128,130,136,138 127,128,130,135 126,129,131,134,1 131,132,133,139,1 131,132,134,139,1 132,135,146,147,1 141,144,146,148 142,143,152,153,1 143,146,151,152 141,144,147,148 143,145,154,156,1 141,143,153,156 142,143,145,147,1 144,144,149,150,1 147,148,153,153,1 147,149,152,153 147,149,154,156,1 152,153,155,157,1 154,156,160,164,1 152,155,161,162`.split(' ');
let s = '';
const dash = 'stroke="#8f98a1" stroke-dasharray="4 3"';
for (let x = 296; x < 1390; x += 32) s += `<path d="M${x}.5 102V172" ${dash}/>`;
for (const y of [103, 136, 169]) s += `<path d="M264 ${y}.5H1392" ${dash}/>`;
s += '<path d="M264 155.500H1392" stroke="#8795a0"/><path d="M264.500 101.500H1392.500V172.500H264.500z" fill="none" stroke="#fff"/><path d="M1160 102h9l-4.500 5z" fill="#788b98"/>';
candles.forEach((c, i) => {
  const [h, t, b, l, full] = c.split(',').map(Number);
  const x = 488 + i * 8;
  s += `<path d="M${x}.5 ${h}V${l + 1}" stroke="#1ee22e"/><rect x="${x - 1.5}" y="${t + 0.5}" width="4" height="${Math.max(b - t, 1)}" fill="${full && b - t > 2 ? '#dfffdc' : '#000'}" stroke="#1ee22e"/>`;
});
['2023', '08:42', '08:50', '08:58', '09:06', '09:14', '09:22', '09:30', '09:38', '09:46', '09:54', '10:02', '10:10', '10:18'].forEach((t, i) => {
  const x = 264 + i * 64;
  s += `<path d="M${x}.5 172v4" stroke="#fff"/><text x="${x - 1}" y="185">10 May ${t}</text>`;
});
s += '<rect x="1394" y="150" width="41" height="11" fill="#fff"/>';
for (const [y, p] of [[103, '2033.35'], [136, '2030.40'], [155, '2028.73'], [169, '2027.50']])
  s += `<path d="M1392 ${y}.5h4" stroke="#fff"/><text${y === 155 ? ' class="current"' : ''} x="1398" y="${y + 4}">${p}</text>`;
s += '<path d="M267 112l4-4 4 4z" fill="#fff"/><text x="278" y="113">XAUUSD-ECN,M1</text><text x="363" y="113">2028.78 2028.86 2028.73 2028.73</text>';
document.getElementById('plot').innerHTML = s;
```
